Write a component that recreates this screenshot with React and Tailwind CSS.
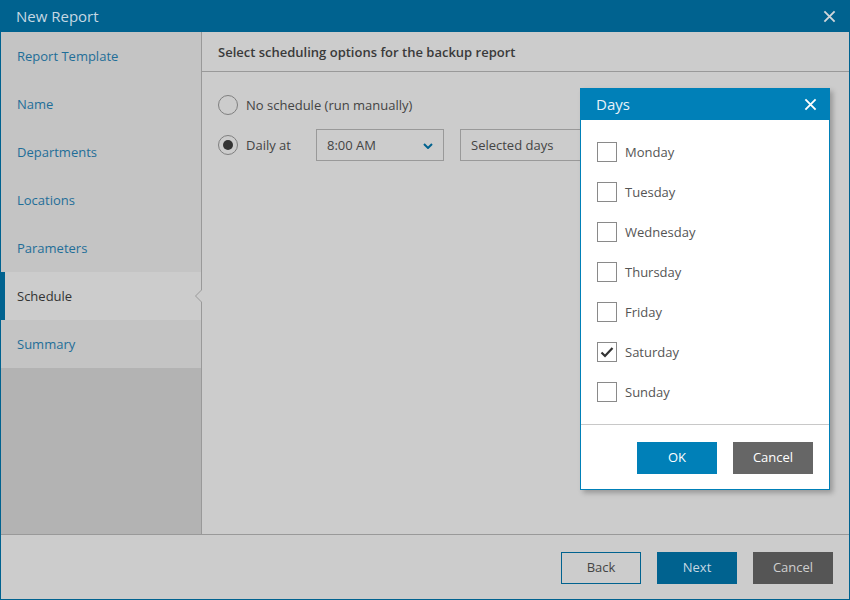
import React, { useState } from 'react';

const steps = ['Report Template', 'Name', 'Departments', 'Locations', 'Parameters', 'Schedule', 'Summary'];
const days = ['Monday', 'Tuesday', 'Wednesday', 'Thursday', 'Friday', 'Saturday', 'Sunday'];

const CloseIcon = ({ className }) => (
  <svg viewBox="0 0 14 14" className={className} fill="none" stroke="currentColor" strokeWidth="2">
    <path d="M1.5 1.5l11 11M12.5 1.5l-11 11" />
  </svg>
);

const Radio = ({ checked, label }) => (
  <div className="flex items-center gap-2 h-5">
    <div className="w-5 h-5 rounded-full border border-[#7f7f7f] flex items-center justify-center">
      {checked && <div className="w-[10px] h-[10px] rounded-full bg-[#333333]" />}
    </div>
    <span className="text-[13px] text-[#444444] pt-px">{label}</span>
  </div>
);

const Checkbox = ({ checked, label }) => (
  <div className="flex items-center gap-2 h-10">
    <div className="w-5 h-5 border border-[#8a8a8a] flex items-center justify-center">
      {checked && (
        <svg viewBox="0 0 16 16" className="w-4 h-4" fill="none" stroke="#333333" strokeWidth="2.2">
          <path d="M2.5 8.5l3.5 3.5 7.5-8" />
        </svg>
      )}
    </div>
    <span className="text-[13px] text-[#555555] pt-px">{label}</span>
  </div>
);

export default function App() {
  const [selected] = useState([false, false, false, false, false, true, false]);

  return (
    <div className="relative w-[850px] h-[600px] bg-[#cccccc] flex flex-col overflow-hidden" style={{ fontFamily: '"Open Sans", "Noto Sans", sans-serif' }}>
      {/* title bar */}
      <div className="h-8 shrink-0 bg-[#00628f] flex items-center justify-between pl-4 pr-[14px]">
        <span className="text-[15px] text-[#c6d8e3]">New Report</span>
        <CloseIcon className="w-[13px] h-[13px] text-[#d0d6da]" />
      </div>

      <div className="flex-1 flex flex-col border-x border-b border-[#00628f] min-h-0">
        <div className="flex-1 flex min-h-0">
          {/* sidebar */}
          <div className="w-[201px] shrink-0 bg-[#b3b3b3] border-r border-[#999999] flex flex-col">
            {steps.map((s) => (
              <div
                key={s}
                className={`relative h-12 flex items-center pt-px text-[13px] ${
                  s === 'Schedule' ? 'bg-[#cccccc] text-[#333333] border-l-4 border-[#00628f] pl-3' : 'bg-[#c4c4c4] text-[#1f6e98] pl-4'
                }`}
              >
                {s}
                {s === 'Schedule' && (
                  <div className="absolute -right-[1px] top-1/2 -translate-y-1/2 w-0 h-0 border-y-[7px] border-y-transparent border-r-[7px] border-r-[#999999]">
                    <div className="absolute top-[-6px] left-[1px] w-0 h-0 border-y-[6px] border-y-transparent border-r-[6px] border-r-[#cccccc]" />
                  </div>
                )}
              </div>
            ))}
          </div>

          {/* content */}
          <div className="flex-1 flex flex-col">
            <div className="h-10 shrink-0 border-b border-[#999999] flex items-center pl-4 pt-[2px]">
              <span className="text-[13px] font-semibold text-[#3a3a3a]">Select scheduling options for the backup report</span>
            </div>
            <div className="pl-4 pt-[23px] flex flex-col">
              <Radio label="No schedule (run manually)" />
              <div className="flex items-center mt-[14px]">
                <div className="w-[98px]">
                  <Radio checked label="Daily at" />
                </div>
                <div className="w-32 h-8 border border-[#999999] flex items-center justify-between pl-[10px] pr-[10px] pt-px text-[13px] text-[#444444]">
                  8:00 AM
                  <svg viewBox="0 0 10 6" className="w-[10px] h-[6px]" fill="none" stroke="#00628f" strokeWidth="2">
                    <path d="M1 1l4 4 4-4" />
                  </svg>
                </div>
                <div className="ml-4 w-[160px] h-8 border border-[#999999] flex items-center pl-[10px] pt-px text-[13px] text-[#444444]">
                  Selected days
                </div>
              </div>
            </div>
          </div>
        </div>

        {/* footer */}
        <div className="h-[65px] shrink-0 border-t border-[#999999] flex items-center justify-end gap-4 pr-4 pt-[2px]">
          <button className="w-20 h-8 border border-[#00628f] text-[13px] text-[#444444]">Back</button>
          <button className="w-20 h-8 bg-[#00628f] text-[13px] text-[#c6d8e3]">Next</button>
          <button className="w-20 h-8 bg-[#555555] text-[13px] text-[#cfcfcf]">Cancel</button>
        </div>
      </div>

      {/* Days dialog */}
      <div className="absolute left-[580px] top-[88px] w-[250px] h-[402px] bg-white border border-[#0080b8] shadow-[3px_3px_5px_rgba(0,0,0,0.25)] flex flex-col">
        <div className="h-8 -mx-px -mt-px bg-[#0080b8] flex items-center justify-between pl-4 pr-[13px]">
          <span className="text-[15px] text-[#e8f2f8]">Days</span>
          <CloseIcon className="w-[13px] h-[13px] text-white" />
        </div>
        <div className="pt-3 pl-4 flex flex-col flex-1">
          {days.map((d, i) => (
            <Checkbox key={d} label={d} checked={selected[i]} />
          ))}
        </div>
        <div className="h-[65px] border-t border-[#c8c8c8] flex items-center justify-end gap-4 pr-4 pt-[2px]">
          <button className="w-20 h-8 bg-[#0080b8] text-[13px] text-white">OK</button>
          <button className="w-20 h-8 bg-[#666666] text-[13px] text-white">Cancel</button>
        </div>
      </div>
    </div>
  );
}
